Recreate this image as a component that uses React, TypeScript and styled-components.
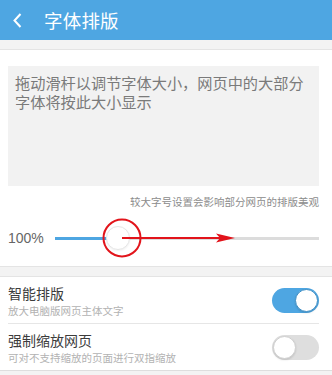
import React from 'react'
import styled, { createGlobalStyle } from 'styled-components'

const GlobalStyle = createGlobalStyle`
  html, body {
    margin: 0;
    padding: 0;
    background: #f3f3f3;
    font-family: "Noto Sans CJK SC", "Noto Sans", sans-serif;
  }
  * { box-sizing: border-box; }
`

const Page = styled.div`
  width: 332px;
  height: 375px;
  overflow: hidden;
  background: #f3f3f3;
`

const Header = styled.div`
  height: 40px;
  background: #4ea6e2;
  display: flex;
  align-items: center;
  padding-left: 13px;
  color: #fff;
`

const Title = styled.div`
  margin-left: 22px;
  font-size: 18.5px;
  line-height: 22px;
  letter-spacing: 0.2px;
`

const Band = styled.div<{ $h: number }>`
  height: ${p => p.$h}px;
  background: #f3f3f3;
  border-bottom: 1px solid #e4e4e4;
`

const Section = styled.div`
  background: #fff;
  padding: 16px 13px 4px 8px;
  border-bottom: 1px solid #e4e4e4;
`

const Preview = styled.div`
  height: 120px;
  background: #f2f2f2;
  padding: 7px 8px 0 7px;
  font-size: 15.2px;
  line-height: 18.5px;
  color: #7a7a7a;
`

const Note = styled.div`
  margin-top: 10px;
  text-align: right;
  font-size: 10.5px;
  line-height: 12px;
  color: #8c8c8c;
  white-space: nowrap;
`

const SliderRow = styled.div`
  position: relative;
  height: 48px;
  margin-top: 6px;
  display: flex;
  align-items: center;
`

const Percent = styled.div`
  width: 47px;
  font-family: "Liberation Sans", Arial, sans-serif;
  font-size: 14px;
  color: #666;
`

const Track = styled.div`
  position: relative;
  flex: 1;
  height: 3px;
  background: #dcdcdc;
`

const Fill = styled.div`
  position: absolute;
  left: 0;
  top: 0;
  bottom: 0;
  background: #4ea6e2;
`

const Thumb = styled.div`
  position: absolute;
  top: 50%;
  width: 24px;
  height: 24px;
  margin: -12px 0 0 -12px;
  border-radius: 50%;
  background: #fff;
  border: 1px solid #e6e6e6;
  box-shadow: 0 1px 2px rgba(0, 0, 0, 0.06);
`

const Annotation = styled.svg`
  position: absolute;
  left: 0;
  top: 0;
  pointer-events: none;
`

const List = styled.div`
  background: #fff;
  border-bottom: 1px solid #dedede;
`

const Row = styled.div<{ $last?: boolean }>`
  height: ${p => (p.$last ? 46 : 47)}px;
  margin: 0 13px 0 8px;
  display: flex;
  align-items: center;
  justify-content: space-between;
  border-bottom: ${p => (p.$last ? 'none' : '1px solid #e6e6e6')};
`

const RowText = styled.div`
  display: flex;
  flex-direction: column;
  padding-top: 1px;
`

const RowTitle = styled.div`
  font-size: 14px;
  line-height: 18px;
  color: #3c3c3c;
`

const RowSub = styled.div`
  margin-top: 2px;
  font-size: 10.5px;
  line-height: 13px;
  color: #b2b2b2;
`

const Toggle = styled.div<{ $on: boolean }>`
  position: relative;
  width: 47px;
  height: 25px;
  border-radius: 13px;
  background: ${p => (p.$on ? '#4ea6e2' : '#dedede')};
`

const Knob = styled.div<{ $on: boolean }>`
  position: absolute;
  top: 1px;
  left: ${p => (p.$on ? '23px' : '1px')};
  width: 23px;
  height: 23px;
  border-radius: 50%;
  background: #fff;
  border: 1px solid ${p => (p.$on ? '#3f8fc6' : '#cfcfcf')};
  box-shadow: 0 1px 2px rgba(0, 0, 0, 0.12);
`

export default function App() {
  const value = 24
  return (
    <Page>
      <GlobalStyle />
      <Header>
        <svg width="9" height="15" viewBox="0 0 9 15">
          <path d="M7.5 1 L1.5 7.5 L7.5 14" fill="none" stroke="#fff" strokeWidth="2" />
        </svg>
        <Title>字体排版</Title>
      </Header>
      <Band $h={10} />
      <Section>
        <Preview>拖动滑杆以调节字体大小，网页中的大部分字体将按此大小显示</Preview>
        <Note>较大字号设置会影响部分网页的排版美观</Note>
        <SliderRow>
          <Percent>100%</Percent>
          <Track>
            <Fill style={{ width: `${value}%` }} />
            <Thumb style={{ left: `${value}%` }} />
          </Track>
          <Annotation width="311" height="48" viewBox="0 0 311 48">
            <circle cx="114" cy="24" r="18.5" fill="none" stroke="#e2141b" strokeWidth="2" />
            <line x1="114" y1="24" x2="212" y2="24" stroke="#e2141b" strokeWidth="2" />
            <path d="M208 19.5 L227 24 L208 28.5 L212 24 Z" fill="#e2141b" />
          </Annotation>
        </SliderRow>
      </Section>
      <Band $h={10} />
      <List>
        <Row>
          <RowText>
            <RowTitle>智能排版</RowTitle>
            <RowSub>放大电脑版网页主体文字</RowSub>
          </RowText>
          <Toggle $on>
            <Knob $on />
          </Toggle>
        </Row>
        <Row $last>
          <RowText>
            <RowTitle>强制缩放网页</RowTitle>
            <RowSub>可对不支持缩放的页面进行双指缩放</RowSub>
          </RowText>
          <Toggle $on={false}>
            <Knob $on={false} />
          </Toggle>
        </Row>
      </List>
    </Page>
  )
}
